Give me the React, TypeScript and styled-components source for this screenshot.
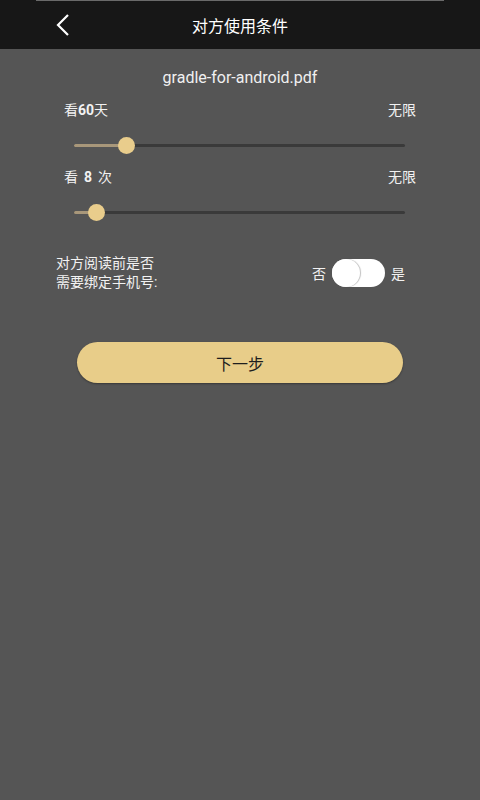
import React from 'react';
import styled, { createGlobalStyle } from 'styled-components';

const GlobalStyle = createGlobalStyle`
   html, body {
      margin: 0;
      padding: 0;
      background: #555555;
   }
   body {
      font-family: Roboto, "Noto Sans CJK SC", sans-serif;
      color: #f2f2f2;
   }
`;

const Page = styled.div`
   width: 480px;
   height: 800px;
   background: #555555;
   display: flex;
   flex-direction: column;
`;

const TopBar = styled.header`
   position: relative;
   height: 49px;
   background: #171717;
   display: flex;
   align-items: center;
   justify-content: center;

   &::before {
      content: '';
      position: absolute;
      top: 0;
      left: 36px;
      right: 36px;
      height: 1px;
      background: #6a6a6a;
   }
`;

const BackButton = styled.button`
   position: absolute;
   left: 50px;
   top: 12px;
   width: 26px;
   height: 26px;
   padding: 0;
   border: 0;
   background: none;
   display: flex;
   align-items: center;
   justify-content: center;
`;

const Title = styled.h1`
   margin: 0;
   font-size: 16px;
   font-weight: 400;
   color: #ffffff;
`;

const Content = styled.main`
   padding: 19px 64px 0;
   display: flex;
   flex-direction: column;
`;

const FileName = styled.div`
   text-align: center;
   font-size: 16px;
   line-height: 20px;
   color: #f0f0f0;
`;

const SliderBlock = styled.section<{ $top: number }>`
   display: flex;
   flex-direction: column;
   margin-top: ${(p) => p.$top}px;
`;

const SliderLabels = styled.div`
   display: flex;
   justify-content: space-between;
   font-size: 14px;
   line-height: 18px;
   color: #f2f2f2;
`;

const Strong = styled.b<{ $spaced?: boolean }>`
   font-weight: 700;
   margin: ${(p) => (p.$spaced ? '0 6px' : '0')};
`;

const Track = styled.div`
   position: relative;
   height: 3px;
   margin: 25px 0 0 10px;
   width: 331px;
   background: #3a3a3a;
   border-radius: 2px;
`;

const Fill = styled.div`
   height: 100%;
   background: #a8977a;
   border-radius: 2px;
`;

const Thumb = styled.span`
   position: absolute;
   top: 50%;
   width: 17px;
   height: 17px;
   margin: -8.5px 0 0 -8.5px;
   border-radius: 50%;
   background: #e9cd8c;
`;

const SwitchRow = styled.section`
   margin: 40px 0 0 -8px;
   display: flex;
   align-items: center;
   justify-content: space-between;
`;

const SwitchLabel = styled.div`
   font-size: 14px;
   line-height: 19px;
   color: #f2f2f2;
`;

const SwitchGroup = styled.div`
   display: flex;
   align-items: center;
   gap: 6px;
   margin-right: 11px;
   font-size: 14px;
   color: #f2f2f2;
`;

const SwitchTrack = styled.div`
   position: relative;
   width: 53px;
   height: 28px;
   border-radius: 14px;
   background: #ffffff;
`;

const SwitchKnob = styled.span`
   position: absolute;
   left: 0;
   top: 0;
   width: 28px;
   height: 28px;
   border-radius: 50%;
   background: #ffffff;
   box-shadow: 1px 0 1px rgba(0, 0, 0, 0.25);
`;

const NextButton = styled.button`
   margin: 50px 0 0 13px;
   width: 326px;
   height: 41px;
   border: 0;
   border-radius: 21px;
   background: #e8cd89;
   box-shadow: 0 1px 2px rgba(0, 0, 0, 0.35);
   font-family: inherit;
   font-size: 16px;
   color: #1e1e1e;
`;

const sliders = [
   { pre: '看', value: '60', post: '天', spaced: false, pct: 52, top: 13 },
   { pre: '看', value: '8', post: '次', spaced: true, pct: 22, top: 21 },
];

const App: React.FC = () => (
   <Page>
      <GlobalStyle />
      <TopBar>
         <BackButton aria-label="返回">
            <svg width="14" height="24" viewBox="0 0 14 24">
               <path d="M12 2 L2 12 L12 22" fill="none" stroke="#fff" strokeWidth="2.2" />
            </svg>
         </BackButton>
         <Title>对方使用条件</Title>
      </TopBar>
      <Content>
         <FileName>gradle-for-android.pdf</FileName>
         {sliders.map((s) => (
            <SliderBlock key={s.post} $top={s.top}>
               <SliderLabels>
                  <span>
                     {s.pre}
                     <Strong $spaced={s.spaced}>{s.value}</Strong>
                     {s.post}
                  </span>
                  <span>无限</span>
               </SliderLabels>
               <Track>
                  <Fill style={{ width: `${s.pct}px` }} />
                  <Thumb style={{ left: `${s.pct}px` }} />
               </Track>
            </SliderBlock>
         ))}
         <SwitchRow>
            <SwitchLabel>
               对方阅读前是否
               <br />
               需要绑定手机号:
            </SwitchLabel>
            <SwitchGroup>
               <span>否</span>
               <SwitchTrack>
                  <SwitchKnob />
               </SwitchTrack>
               <span>是</span>
            </SwitchGroup>
         </SwitchRow>
         <NextButton>下一步</NextButton>
      </Content>
   </Page>
);

export default App;
